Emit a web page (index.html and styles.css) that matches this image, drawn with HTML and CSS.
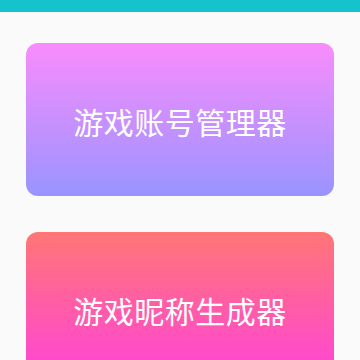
FILE: index.html
```html
<!DOCTYPE html>
<html lang="zh-CN">
  <head>
    <meta charset="UTF-8" />
    <meta name="viewport" content="width=device-width, initial-scale=1.0" />
    <title>游戏工具</title>
    <link rel="stylesheet" href="styles.css">
  </head>
  <body>
    <div class="status-bar"></div>
    <div class="menu-list">
      <a class="menu-card card-account" href="#">游戏账号管理器</a>
      <a class="menu-card card-nickname" href="#">游戏昵称生成器</a>
    </div>
  </body>
</html>
```

FILE: styles.css
```css
* {
  margin: 0;
  padding: 0;
  box-sizing: border-box;
}

body {
  font-family: "Noto Sans CJK SC", "Noto Sans", sans-serif;
  background-color: #fafafa;
  overflow: hidden;
}

.status-bar {
  height: 12px;
  background-color: #14c3cc;
}

.menu-list {
  display: flex;
  flex-direction: column;
  gap: 36px;
  padding: 31px 26px 0;
}

.menu-card {
  display: flex;
  justify-content: center;
  align-items: center;
  height: 153px;
  border-radius: 12px;
  color: #ffffff;
  font-size: 30px;
  letter-spacing: 0.5px;
  text-decoration: none;
  padding-top: 3px;
}

.card-account {
  background: linear-gradient(to bottom, #f98cfc, #9994ff);
}

.card-nickname {
  background: linear-gradient(to bottom, #ff7676, #ff42dc);
}
```
